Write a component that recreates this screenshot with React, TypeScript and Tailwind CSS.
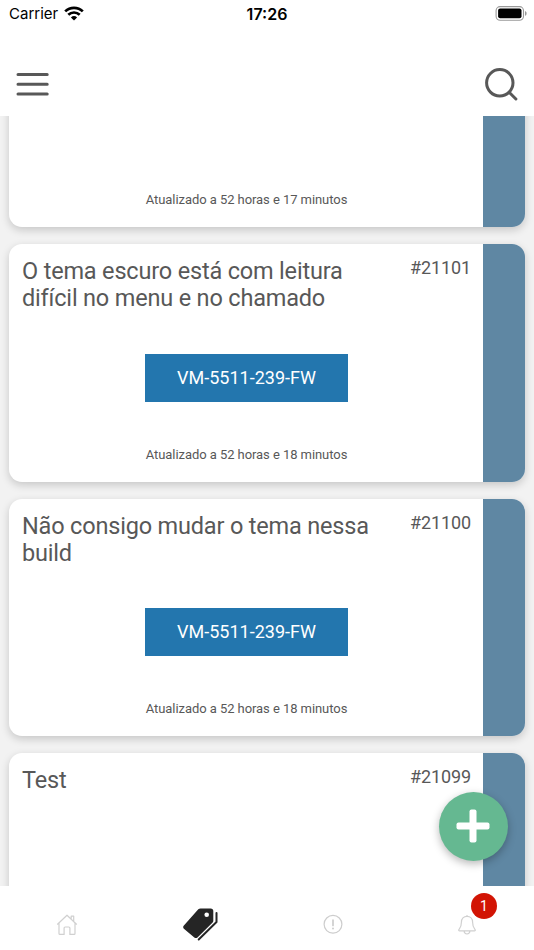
import React from 'react'
import clsx from 'clsx'

interface Ticket {
  key: number
  id?: string
  title: string[]
  device?: string
  updated?: string
}

const tickets: Ticket[] = [
  {
    key: 1,
    title: [],
    updated: 'Atualizado a 52 horas e 17 minutos'
  },
  {
    key: 2,
    id: '#21101',
    title: ['O tema escuro está com leitura', 'difícil no menu e no chamado'],
    device: 'VM-5511-239-FW',
    updated: 'Atualizado a 52 horas e 18 minutos'
  },
  {
    key: 3,
    id: '#21100',
    title: ['Não consigo mudar o tema nessa', 'build'],
    device: 'VM-5511-239-FW',
    updated: 'Atualizado a 52 horas e 18 minutos'
  },
  {
    key: 4,
    id: '#21099',
    title: ['Test']
  }
]

function StatusBar() {
  return (
    <div className="grid h-7 grid-cols-3 items-center pl-[9px] pr-[7px] font-['Inter',sans-serif] text-black">
      <div className="flex items-center gap-[6px]">
        <span className="text-[15px] leading-7">Carrier</span>
        <svg width="20" height="15" viewBox="0 0 20 15" className="-mt-[2px]" fill="none" stroke="#000" strokeWidth="2.7">
          <path d="M1.2 5.4a12.6 12.6 0 0 1 17.6 0" />
          <path d="M4.3 8.8a8.2 8.2 0 0 1 11.4 0" />
          <path d="M10 14.6 6.9 11.5a4.5 4.5 0 0 1 6.2 0Z" fill="#000" stroke="none" />
        </svg>
      </div>
      <span className="pr-[2px] text-center text-[16px] font-semibold leading-7">17:26</span>
      <svg width="32" height="15" viewBox="0 0 32 15" className="-mt-px justify-self-end">
        <rect x="1.1" y=".6" width="27.4" height="13.6" rx="4" fill="none" stroke="#999" strokeWidth="1.1" />
        <rect x="3.1" y="2.5" width="23.4" height="9.8" rx="2" fill="#000" />
        <path d="M30 5v4.800c1-.4 1.600-1.300 1.600-2.400S31 5.400 30 5Z" fill="#999" />
      </svg>
    </div>
  )
}

function Header() {
  return (
    <header className="relative z-10 h-[116px] shrink-0 bg-white">
      <StatusBar />
      <div className="flex items-center justify-between pl-4 pr-[15px] pt-[38px]">
        <button type="button" aria-label="Menu">
          <svg width="34" height="36" viewBox="0 0 34 36" stroke="#585858" strokeWidth="3" strokeLinecap="round">
            <path d="M2 8.600h29.200M2 18.300h29.200M2 28h29.200" />
          </svg>
        </button>
        <button type="button" aria-label="Buscar">
          <svg width="36" height="36" viewBox="0 0 36 36" fill="none" stroke="#585858" strokeWidth="3" strokeLinecap="round">
            <circle cx="16.800" cy="16.800" r="13.200" />
            <path d="m26.400 26.500 6.500 6.500" />
          </svg>
        </button>
      </div>
    </header>
  )
}

function TicketCard({ ticket, className }: { ticket: Ticket; className?: string }) {
  return (
    <article
      className={clsx(
        'flex h-[237.5px] shrink-0 overflow-hidden rounded-[13px] bg-white text-[#585858]',
        'shadow-[0_3px_9px_rgba(0,0,0,0.18)]',
        className
      )}
    >
      <div className="flex flex-1 flex-col items-center pl-[13px] pr-3">
        <div className="flex h-[109.500px] w-full items-start justify-between pt-[14px]">
          <h2 className="whitespace-nowrap text-[23.500px] leading-[27px] tracking-[-0.18px]">
            {ticket.title.map((line) => (
              <span key={line} className="block">{line}</span>
            ))}
          </h2>
          <span className="text-[18px] leading-5 tracking-[-0.1px]">{ticket.id}</span>
        </div>
        {ticket.device && (
          <button type="button" className="h-[48px] w-[203px] bg-[#2376ae] pb-px text-[18px] text-white">
            {ticket.device}
          </button>
        )}
        {ticket.updated && (
          <p className="mb-[17px] mt-auto text-[13px] leading-5 tracking-[-0.06px]">{ticket.updated}</p>
        )}
      </div>
      <div className="w-[42px] bg-[#5f87a3]" />
    </article>
  )
}

function TabBar() {
  return (
    <nav className="relative z-10 grid h-[64px] shrink-0 grid-cols-4 bg-white">
      <button type="button" aria-label="Início" className="flex justify-center pt-7">
        <svg width="22" height="22" viewBox="0 0 22 22" fill="none" stroke="#d0d0d0" strokeWidth="1.2" strokeLinecap="round" strokeLinejoin="round">
          <path d="M1.500 10.200 11 1.200l9.500 9M3 9v10.500c0 .6.300.9.900.9h4.200v-6.300c0-.7.400-1.100 1.100-1.100h3.600c.7 0 1.100.4 1.100 1.100v6.300h4.200c.600 0 .9-.3.900-.9V9M15.200 4.500V2.100h2.500v5" />
        </svg>
      </button>
      <button type="button" aria-label="Chamados" className="flex justify-center pt-[21px]">
        <svg width="36" height="34" viewBox="0 0 36 34">
          <path d="M18.500 1.400h10.200c1.600 0 2.600 1 2.600 2.600v9.700c0 .8-.3 1.500-.9 2.100L15.500 30.400c-1 .9-2.200.9-3.200 0L1.900 21.700c-1-1-1-2.200 0-3.200L16.300 2.300c.6-.6 1.300-.9 2.200-.9Z" fill="#252525" />
          <circle cx="24.700" cy="7.700" r="2.300" fill="#fff" />
          <path d="M34.500 6v9L16.700 32.500" fill="none" stroke="#252525" strokeWidth="2" strokeLinecap="round" strokeLinejoin="round" />
        </svg>
      </button>
      <button type="button" aria-label="Alertas" className="flex justify-center pr-[2px] pt-7">
        <svg width="20" height="21" viewBox="0 0 20 21" fill="none" stroke="#cdcdcd" strokeWidth="1.200" strokeLinecap="round">
          <circle cx="10" cy="10.300" r="8.900" />
          <path d="M10 6v5.500" strokeWidth="1.700" />
          <circle cx="10" cy="14.500" r="1" fill="#cdcdcd" stroke="none" />
        </svg>
      </button>
      <button type="button" aria-label="Notificações" className="relative flex justify-center pt-7">
        <svg width="20" height="22" viewBox="0 0 20 22" fill="none" stroke="#d0d0d0" strokeWidth="1.200" strokeLinejoin="round">
          <path d="M10 1v1.300M4.400 8.200c0-3.500 2.300-5.900 5.600-5.900s5.600 2.400 5.600 5.900c0 5.300 2 6.500 2.600 7.500.300.600 0 1.100-.7 1.100H2.500c-.7 0-1-.5-.7-1.100.6-1 2.600-2.200 2.600-7.500ZM7 16.800c.2 2 1.400 3.200 3 3.200s2.800-1.200 3-3.200" />
        </svg>
        <span className="absolute left-[70.500px] top-[7px] flex size-[26px] items-center justify-center rounded-full bg-[#d21404] text-[14px] text-white">
          1
        </span>
      </button>
    </nav>
  )
}

export default function App() {
  return (
    <div className="relative flex h-[950px] w-[534px] flex-col overflow-hidden bg-[#f2f2f2] font-['Roboto',sans-serif]">
      <Header />
      <main className="flex min-h-0 flex-1 flex-col gap-[17px] overflow-hidden px-[9px]">
        {tickets.map((ticket, i) => (
          <TicketCard key={ticket.key} ticket={ticket} className={i === 0 ? '-mt-[126.500px]' : undefined} />
        ))}
      </main>

      {/* Floating action button */}
      <button
        type="button"
        aria-label="Novo chamado"
        className="absolute left-[438.500px] top-[791.500px] z-20 flex size-[69px] items-center justify-center rounded-full bg-[#65b891] shadow-[0_3px_8px_rgba(0,0,0,0.28)]"
      >
        <svg width="34" height="34" viewBox="0 0 34 34" fill="#fff">
          <rect x=".5" y="13.500" width="33" height="7" rx="2" />
          <rect x="13.500" y=".5" width="7" height="33" rx="2" />
        </svg>
      </button>
      <TabBar />
    </div>
  )
}
